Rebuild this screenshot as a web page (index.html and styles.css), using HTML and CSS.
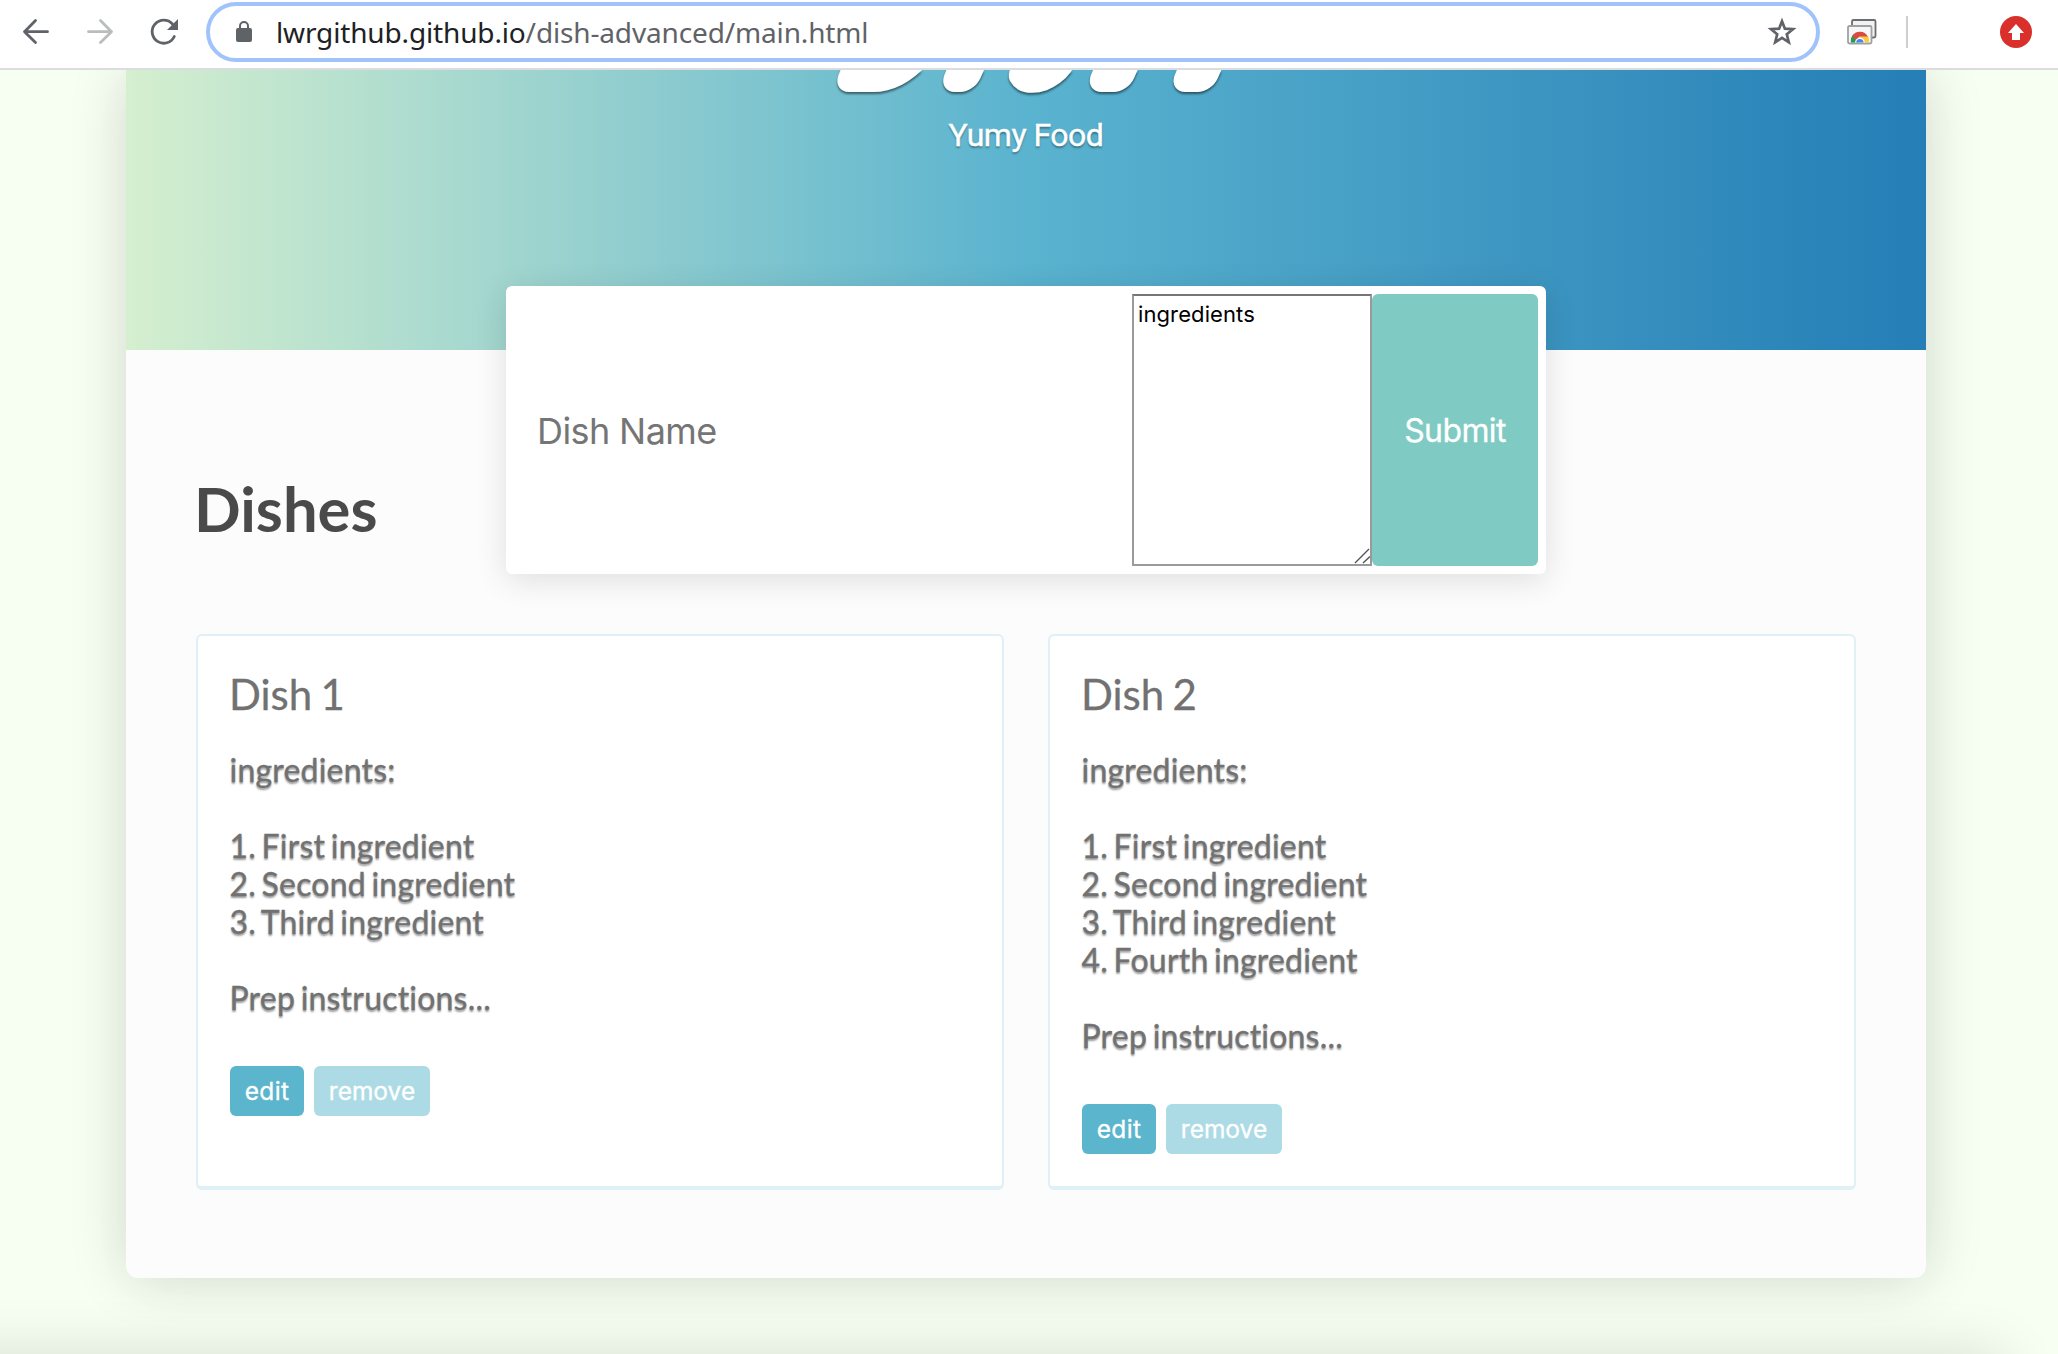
FILE: index.html
```html
<!DOCTYPE html>
<html lang="en">
<head>
<meta charset="utf-8">
<title>Dish</title>
<link rel="stylesheet" href="styles.css">
</head>
<body>
<div class="toolbar">
  <svg class="nav-icons" width="206" height="68" viewBox="0 0 206 68" fill="none" stroke-width="2.8" stroke-linecap="round" stroke-linejoin="round">
    <path stroke="#5f6368" d="M47.5 31.7H24.5M35.5 20.5L24.5 31.7L35.5 42.5"/>
    <path stroke="#babcbe" d="M88.5 31.7H111.5M100.500 20.500L111.500 31.700L100.500 42.500"/>
    <path stroke="#5f6368" d="M174.300 36.500A11.600 11.600 0 1 1 172.500 24"/>
    <path fill="#5f6368" d="M178 19V30H167Z"/>
  </svg>
  <div class="omnibox">
    <svg class="lock" width="18" height="22" viewBox="0 0 18 22"><rect x="1" y="7" width="16" height="14" rx="2" fill="#5f6368"/><path d="M5 8V5a4 4 0 0 1 8 0V8" fill="none" stroke="#5f6368" stroke-width="2"/></svg>
    <span class="url">lwrgithub.github.io<span class="path">/dish-advanced/main.html</span></span>
    <svg class="star" width="30" height="30" viewBox="0 0 30 30"><path d="M15 4.200L17.900 11.700L26 12.200L19.800 17.300L21.800 25.300L15 20.900L8.200 25.300L10.200 17.300L4 12.200L12.100 11.700Z" fill="none" stroke="#5f6368" stroke-width="2.700"/></svg>
  </div>
  <svg class="cast" width="32" height="28" viewBox="0 0 32 28">
    <rect x="6" y="2" width="23.500" height="17.500" rx="1.500" fill="#f1f2f3" stroke="#6d6d6d" stroke-width="1.800"/>
    <rect x="2" y="8" width="23.500" height="17.500" rx="1.500" fill="#f6f7f8" stroke="#a0a0a0" stroke-width="1.800"/>
    <path d="M5 24.600A9 9 0 0 1 8 16L13.500 21V24.600Z" fill="#249a55"/>
    <path d="M13.500 18H22A9 9 0 0 1 22.800 24.600H13.500Z" fill="#fbcb43"/>
    <path d="M6.200 18A8.900 8.900 0 0 1 21.800 18.500H13.500L10 22Z" fill="#da4a40"/>
    <path d="M9 24.600a4.900 4.900 0 1 1 9.800 0Z" fill="#fff"/>
    <path d="M10.200 24.600a3.700 3.700 0 1 1 7.400 0Z" fill="#4485ef"/>
  </svg>
  <span class="divider"></span>
  <svg class="update" width="32" height="32" viewBox="0 0 32 32"><circle cx="16" cy="16" r="16" fill="#d9302c"/><path d="M16 8L24 17H20V24H12V17H8Z" fill="#fff"/></svg>
</div>
<div class="page">
  <main class="container">
    <header class="hero">
      <svg class="logo" width="1800" height="40" viewBox="0 0 1800 40">
        <text transform="translate(0 6) skewX(-18)"><tspan class="l-bowl" x="722">D</tspan><tspan class="l-stem" x="829">i</tspan><tspan class="l-bowl" x="897">s</tspan><tspan class="l-arch" x="970">h</tspan></text>
      </svg>
      <p class="tagline">Yumy Food</p>
    </header>
    <form class="dish-form">
      <input class="dish-name" type="text" placeholder="Dish Name">
      <div class="area-wrap">
        <textarea class="ingredients">ingredients</textarea>
        <svg class="grip" width="16" height="16" viewBox="0 0 16 16" stroke="#555" stroke-width="1.400"><path d="M1 15L15 1M9 15L16 8.500"/></svg>
      </div>
      <button class="submit" type="button">Submit</button>
    </form>
    <h2 class="heading">Dishes</h2>
    <section class="cards">
      <article class="card">
        <h3 class="card-title">Dish 1</h3>
        <div class="card-text">ingredients:<br><br>1. First ingredient<br>2. Second ingredient<br>3. Third ingredient<br><br>Prep instructions...</div>
        <div class="actions"><button class="btn edit" type="button">edit</button><button class="btn remove" type="button">remove</button></div>
      </article>
      <article class="card">
        <h3 class="card-title">Dish 2</h3>
        <div class="card-text">ingredients:<br><br>1. First ingredient<br>2. Second ingredient<br>3. Third ingredient<br>4. Fourth ingredient<br><br>Prep instructions...</div>
        <div class="actions"><button class="btn edit" type="button">edit</button><button class="btn remove" type="button">remove</button></div>
      </article>
    </section>
  </main>
  <footer class="footer"></footer>
</div>
</body>
</html>
```
FILE: styles.css
```css
* { box-sizing: border-box; }
body {
  margin: 0;
  width: 2058px;
  height: 1354px;
  overflow: hidden;
  display: flex;
  flex-direction: column;
  background: #f7fef2;
  font-family: Lato, sans-serif;
}
.toolbar {
  height: 70px;
  flex: none;
  display: flex;
  align-items: flex-start;
  background: #fff;
  border-bottom: 2px solid #dadce0;
}
.nav-icons { flex: none; }
.omnibox {
  width: 1614px;
  height: 60px;
  margin-top: 2px;
  border: 4px solid #a0c3fb;
  border-radius: 30px;
  display: flex;
  align-items: center;
  padding: 0 19px 0 25px;
}
.lock { margin-right: 23px; }
.url {
  flex: 1;
  font: 28px/36px "Noto Sans", sans-serif;
  letter-spacing: -.15px;
  color: #202124;
  white-space: nowrap;
}
.path { color: #5f6368; }
.cast { margin: 18px 0 0 26px; }
.divider { width: 2px; height: 32px; margin: 16px 0 0 28px; background: #cfcfcf; }
.update { margin: 16px 0 0 92px; }

.page {
  height: 1284px;
  overflow: hidden;
  display: flex;
  flex-direction: column;
  align-items: center;
}
.container {
  width: 1800px;
  height: 1208px;
  flex: none;
  margin-right: 6px;
  background: #fcfcfc;
  border-radius: 0 0 12px 12px;
  box-shadow: 0 0 60px rgba(0, 0, 0, .14), 0 10px 60px rgba(0, 0, 0, .02);
  display: flex;
  flex-direction: column;
}
.hero {
  height: 280px;
  flex: none;
  overflow: hidden;
  background: linear-gradient(90deg, #d5efcf, #5ab3cf 50%, #257eb6);
  color: #fff;
  text-align: center;
}
.logo {
  display: block;
  font-family: Lato, sans-serif;
  font-style: italic;
  font-weight: 300;
  fill: #fff;
  stroke: #fff;
  stroke-width: 32px;
  stroke-linejoin: round;
  filter: drop-shadow(0 2px 1px rgba(0, 0, 0, .5));
}
.l-bowl { font-size: 100px; }
.l-stem { font-size: 110px; }
.l-arch { font-size: 262px; }
.tagline {
  margin: 5px 0 0;
  font: 32px/40px Roboto, sans-serif;
  letter-spacing: -.5px;
  -webkit-text-stroke: .4px #fff;
  text-shadow: 0 2px 2px rgba(0, 0, 0, .35);
}
.dish-form {
  width: 1040px;
  height: 288px;
  margin: -64px auto 0;
  flex: none;
  padding: 8px;
  display: flex;
  background: #fff;
  border-radius: 6px;
  box-shadow: 0 6px 32px rgba(0, 0, 0, .12);
}
.dish-name {
  flex: 1;
  min-width: 0;
  border: 0;
  padding: 2px 23px 0;
  background: none;
  font: 36px Inter, sans-serif;
  letter-spacing: -.6px;
}
.dish-name::placeholder { color: #757575; }
.area-wrap { position: relative; width: 240px; }
.ingredients {
  display: block;
  width: 240px;
  height: 272px;
  resize: none;
  border: 2px solid #9a9a9a;
  border-top-color: #767676;
  border-radius: 0;
  padding: 4px;
  font: 22px/28px Inter, sans-serif;
  letter-spacing: .1px;
  color: #000;
}
.grip { position: absolute; right: 2px; bottom: 2px; }
.submit {
  width: 166px;
  border: 0;
  border-radius: 6px;
  background: #7fcbc3;
  color: #fff;
  font: 32px Inter, sans-serif;
  letter-spacing: -.6px;
  -webkit-text-stroke: .3px #fff;
}
.heading {
  margin: -102px 0 0 68px;
  font-size: 61.500px;
  line-height: 72px;
  font-weight: 700;
  color: #4a4a4a;
}
.cards {
  display: grid;
  grid-template-columns: 808px 808px;
  gap: 44px;
  margin: 90px 0 0 70px;
}
.card {
  height: 556px;
  padding: 33px 32px;
  background: #fff;
  border: 2px solid #dff0f6;
  border-bottom-width: 4px;
  border-radius: 6px;
  color: #717171;
}
.card-title {
  margin: 0 0 0 -1px;
  font-size: 42px;
  line-height: 50px;
  font-weight: 400;
  word-spacing: -2.500px;
  -webkit-text-stroke: .3px #717171;
}
.card-text {
  margin: 32px 0 0 -.5px;
  font-size: 32px;
  line-height: 38px;
  letter-spacing: .2px;
  word-spacing: -2.800px;
  -webkit-text-stroke: .3px #717171;
  text-shadow: 0 2px 2px rgba(0, 0, 0, .4);
}
.actions { display: flex; gap: 10px; margin-top: 49px; }
.btn {
  height: 50px;
  padding: 0;
  border: 0;
  border-radius: 6px;
  color: #fff;
  font: 24.500px Inter, sans-serif;
  -webkit-text-stroke: .3px #fff;
}
.edit { width: 74px; background: #5bb5cd; letter-spacing: .3px; }
.remove { width: 116px; background: #addbe5; }
.footer {
  width: 2140px;
  height: 60px;
  flex: none;
  margin: 78px 192px 0 0;
  box-shadow: 0 0 60px rgba(0, 0, 0, .14);
}
```
